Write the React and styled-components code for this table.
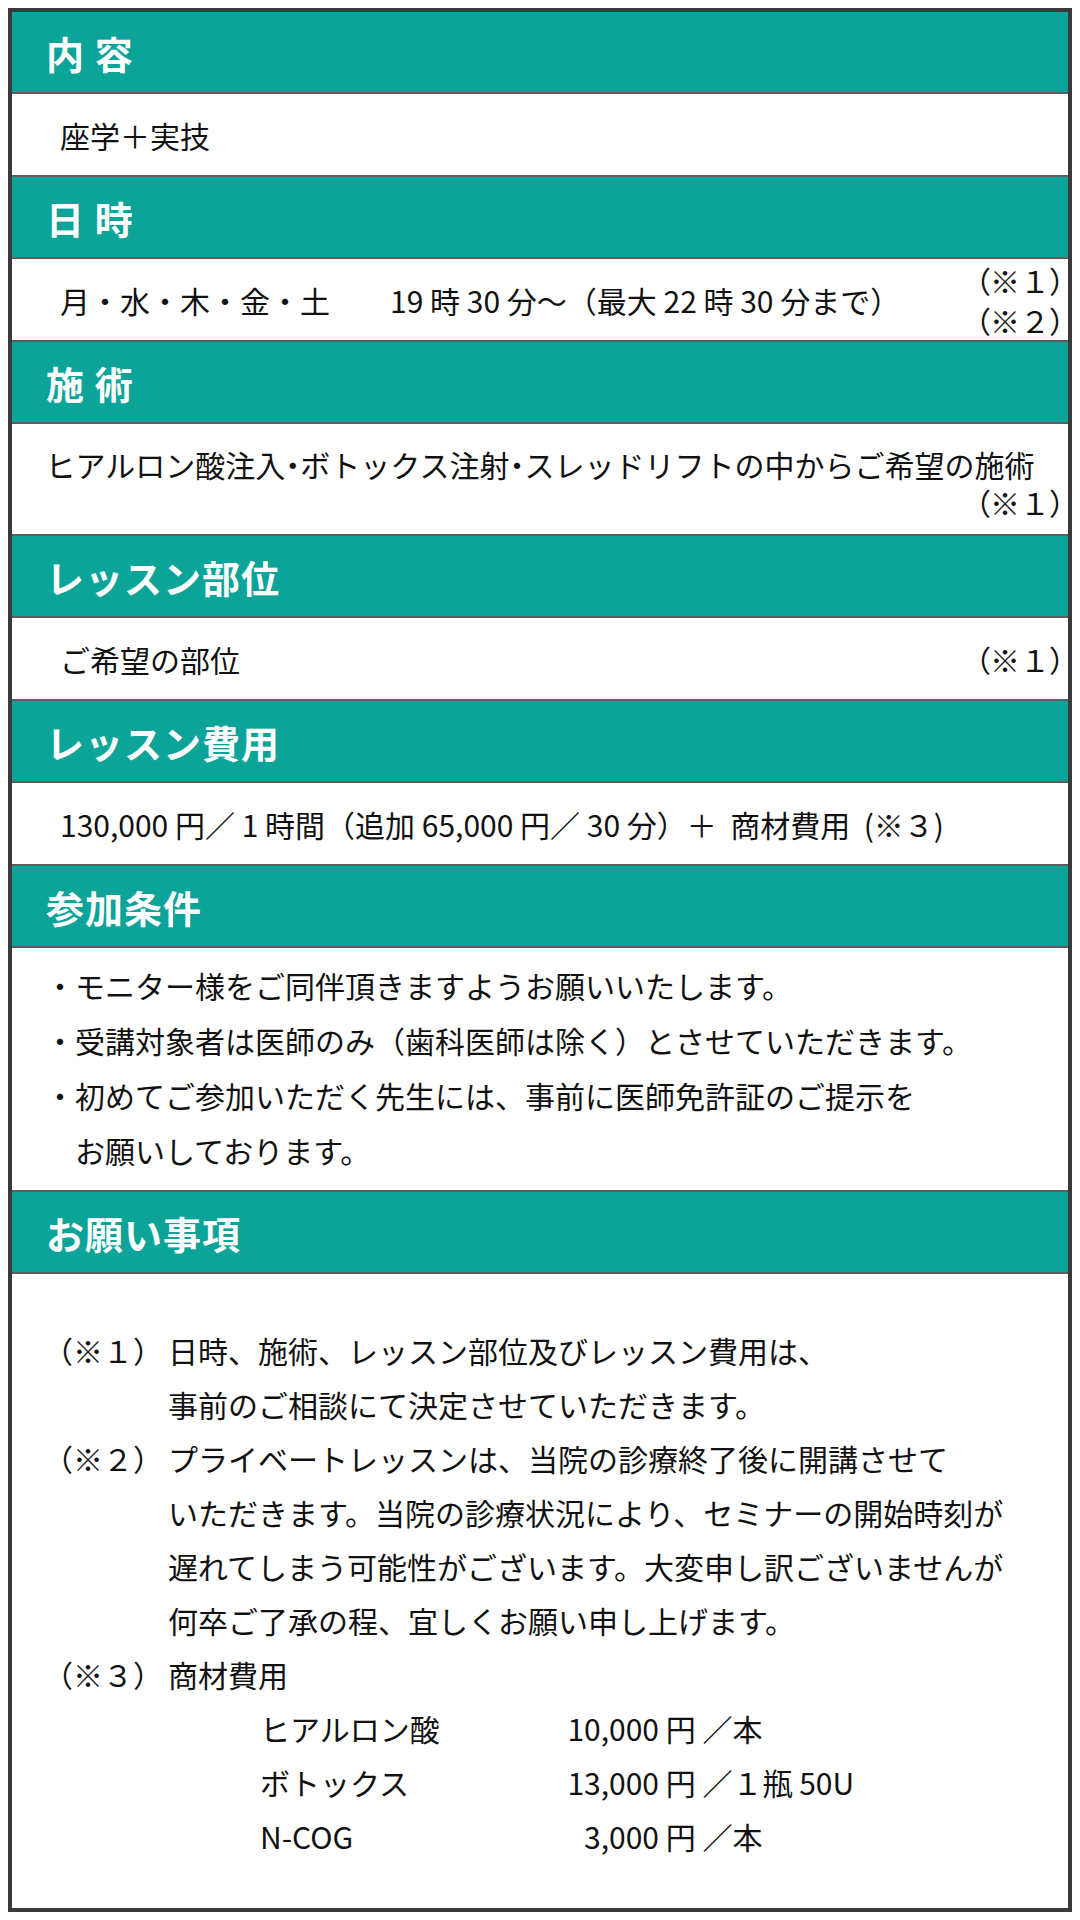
import React from 'react';
import styled, { createGlobalStyle } from 'styled-components';

const GlobalStyle = createGlobalStyle`
  body {
    margin: 8px;
    background: #ffffff;
    font-family: "Noto Sans CJK JP", "Noto Sans", sans-serif;
    color: #111111;
  }
`;

const Frame = styled.div`
  border: 4px solid #3a3a3a;
  background: #ffffff;
  display: flex;
  flex-direction: column;
`;

const Head = styled.div`
  height: 80px;
  display: flex;
  align-items: center;
  padding-left: 34px;
  background: #0ca398;
  color: #ffffff;
  font-size: 38px;
  font-weight: 700;
  letter-spacing: 1px;
  border-top: 2px solid #5e5e5e;
  &:first-child {
    border-top: 0;
  }
`;

const Row = styled.div`
  height: 81px;
  display: flex;
  align-items: center;
  justify-content: space-between;
  padding: 0 3px 0 48px;
  font-size: 30px;
  border-top: 2px solid #5e5e5e;
`;

const Notes = styled.div`
  display: flex;
  flex-direction: column;
  align-items: flex-end;
  line-height: 40px;
`;

const Paren = styled.span`
  font-feature-settings: "palt";
`;

const Dot = styled.span`
  font-feature-settings: "palt";
`;

const Mark = ({ n }) => (
  <span>
    <Paren>（</Paren>※{n}<Paren>）</Paren>
  </span>
);

const CenterBlock = styled.div`
  display: flex;
  flex-direction: column;
  padding: 21px 3px 13px;
  font-size: 30px;
  line-height: 38px;
  border-top: 2px solid #5e5e5e;
`;

const CenterLine = styled.div`
  text-align: ${p => (p.$right ? 'right' : 'center')};
`;

const List = styled.ul`
  margin: 0;
  list-style: none;
  padding: 10px 0 12px 33px;
  font-size: 30px;
  line-height: 55px;
  border-top: 2px solid #5e5e5e;
`;

const Item = styled.li`
  padding-left: 1em;
  text-indent: -1em;
`;

const Remarks = styled.div`
  padding: 49px 0 45px 31px;
  font-size: 30px;
  line-height: 54px;
  border-top: 2px solid #5e5e5e;
`;

const Remark = styled.div`
  display: grid;
  grid-template-columns: 125px 1fr;
`;

const Materials = styled.div`
  display: grid;
  grid-template-columns: 307px 92px auto;
  margin-left: 217px;
  white-space: pre;
`;

const Price = styled.span`
  text-align: right;
`;

const materials = [
  ['ヒアルロン酸', '10,000', ' 円 ／本'],
  ['ボトックス', '13,000', ' 円 ／１瓶 50U'],
  ['N-COG', '3,000', ' 円 ／本'],
];

export default function App() {
  return (
    <>
      <GlobalStyle />
      <Frame>
        <Head>内 容</Head>
        <Row>座学＋実技</Row>

        <Head>日 時</Head>
        <Row>
          <span>月・水・木・金・土　　19 時 30 分〜（最大 22 時 30 分まで）</span>
          <Notes>
            <Mark n="１" />
            <Mark n="２" />
          </Notes>
        </Row>

        <Head>施 術</Head>
        <CenterBlock>
          <CenterLine>
            ヒアルロン酸注入<Dot>・</Dot>ボトックス注射<Dot>・</Dot>スレッドリフトの中からご希望の施術
          </CenterLine>
          <CenterLine $right>
            <Mark n="１" />
          </CenterLine>
        </CenterBlock>

        <Head>レッスン部位</Head>
        <Row>
          <span>ご希望の部位</span>
          <Mark n="１" />
        </Row>

        <Head>レッスン費用</Head>
        <Row>
          <span>130,000 円／ 1 時間（追加 65,000 円／ 30 分）＋&nbsp; 商材費用 &nbsp;(※３)</span>
        </Row>

        <Head>参加条件</Head>
        <List>
          <Item>・モニター様をご同伴頂きますようお願いいたします。</Item>
          <Item>・受講対象者は医師のみ（歯科医師は除く）とさせていただきます。</Item>
          <Item>
            ・初めてご参加いただく先生には、事前に医師免許証のご提示を
            <br />
            お願いしております。
          </Item>
        </List>

        <Head>お願い事項</Head>
        <Remarks>
          <Remark>
            <span>（※１）</span>
            <span>
              日時、施術、レッスン部位及びレッスン費用は、
              <br />
              事前のご相談にて決定させていただきます。
            </span>
          </Remark>
          <Remark>
            <span>（※２）</span>
            <span>
              プライベートレッスンは、当院の診療終了後に開講させて
              <br />
              いただきます。当院の診療状況により、セミナーの開始時刻が
              <br />
              遅れてしまう可能性がございます。大変申し訳ございませんが
              <br />
              何卒ご了承の程、宜しくお願い申し上げます。
            </span>
          </Remark>
          <Remark>
            <span>（※３）</span>
            <span>商材費用</span>
          </Remark>
          <Materials>
            {materials.map(([name, num, unit]) => (
              <React.Fragment key={name}>
                <span>{name}</span>
                <Price>{num}</Price>
                <span>{unit}</span>
              </React.Fragment>
            ))}
          </Materials>
        </Remarks>
      </Frame>
    </>
  );
}
